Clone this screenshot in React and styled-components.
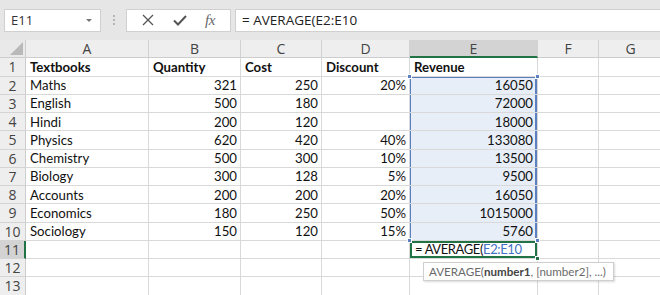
import React from 'react';
import styled, { createGlobalStyle } from 'styled-components';

const GlobalStyle = createGlobalStyle`
  html, body {
    margin: 0;
    padding: 0;
    background: #ffffff;
    overflow: hidden;
  }
  * { box-sizing: border-box; }
`;

const Sheet = styled.div`
  width: 660px;
  height: 295px;
  overflow: hidden;
  font-family: Lato, 'Noto Sans', sans-serif;
  background: #fff;
`;

const FormulaBar = styled.div`
  height: 40px;
  background: #e6e6e6;
  display: flex;
  align-items: center;
  padding: 0 0 0 4px;
`;

const NameBox = styled.div`
  width: 97px;
  height: 23px;
  background: #fff;
  border: 1px solid #d0d0d0;
  display: flex;
  align-items: center;
  justify-content: space-between;
  padding: 0 8px 0 6px;
  font-family: 'Open Sans', sans-serif;
  font-size: 13px;
  color: #333;
`;

const Caret = styled.span`
  width: 0;
  height: 0;
  border-left: 3px solid transparent;
  border-right: 3px solid transparent;
  border-top: 3px solid #777;
`;

const Grip = styled.div`
  width: 25px;
  display: flex;
  flex-direction: column;
  align-items: center;
  gap: 2px;

  span {
    width: 2px;
    height: 2px;
    background: #b4b4b4;
  }
`;

const IconBox = styled.div`
  width: 105px;
  height: 23px;
  background: #fff;
  border: 1px solid #d0d0d0;
  display: flex;
  align-items: center;
  justify-content: space-around;
  padding: 0 6px;
  color: #555;
`;

const Fx = styled.span`
  font-family: 'Liberation Serif', serif;
  font-style: italic;
  font-size: 15px;
  color: #666;
  letter-spacing: -0.5px;
`;

const FormulaInput = styled.div`
  flex: 1;
  height: 23px;
  margin-left: 4px;
  background: #fff;
  border: 1px solid #d0d0d0;
  border-right: none;
  display: flex;
  align-items: center;
  padding-left: 6px;
  font-family: 'Open Sans', sans-serif;
  font-size: 13.5px;
  color: #222;
`;

const Grid = styled.div`
  display: grid;
  grid-template-columns: 26px 123px 92px 81px 88px 128px 61px 64px 1fr;
  grid-auto-rows: 18.25px;
`;

const Corner = styled.div`
  background: #e9e9e9;
  border-right: 1px solid #cdcdcd;
  border-bottom: 1px solid #cdcdcd;
  position: relative;
  overflow: hidden;

  &::after {
    content: '';
    position: absolute;
    right: 2px;
    bottom: 2px;
    border-left: 13px solid transparent;
    border-bottom: 13px solid #b9b9b9;
  }
`;

const ColHead = styled.div`
  background: ${p => (p.$active ? '#d3d3d3' : '#eeeeee')};
  border-right: 1px solid #d2d2d2;
  border-bottom: ${p => (p.$active ? '2px solid #217346' : '1px solid #cdcdcd')};
  display: flex;
  align-items: center;
  justify-content: center;
  font-family: 'Open Sans', sans-serif;
  font-size: 14px;
  color: #444;
`;

const RowHead = styled.div`
  background: ${p => (p.$active ? '#d3d3d3' : '#eeeeee')};
  border-right: ${p => (p.$active ? '2px solid #217346' : '1px solid #cdcdcd')};
  border-bottom: 1px solid #d4d4d4;
  display: flex;
  align-items: center;
  justify-content: center;
  font-family: 'Open Sans', sans-serif;
  font-size: 14px;
  color: #444;
`;

const Cell = styled.div`
  position: relative;
  border-right: 1px solid #d9d9d9;
  border-bottom: 1px solid #d9d9d9;
  background: ${p => (p.$inRange ? '#e8eef8' : '#fff')};
  display: flex;
  align-items: center;
  justify-content: ${p => (p.$right ? 'flex-end' : 'flex-start')};
  padding: 0 ${p => (p.$inRange ? 4 : 3)}px 0 4px;
  font-size: 13.2px;
  font-weight: ${p => (p.$bold ? 700 : 400)};
  color: #111;
  white-space: nowrap;
  ${p => p.$inRange && `
    box-shadow: inset 1px 0 0 #5b7fc0, inset -2px 0 0 #5b7fc0
      ${p.$top ? ', inset 0 1px 0 #5b7fc0' : ''};
  `}
  ${p => p.$active && `
    box-shadow: inset 0 0 0 2px #217346;
    padding-left: 5px;
    font-size: 13px;
    letter-spacing: -0.4px;
    overflow: visible;
  `}
`;

const Handle = styled.span`
  position: absolute;
  width: 5px;
  height: 5px;
  background: ${p => p.$color};
  border: 1px solid #fff;
  ${p => (p.$top ? 'top: -3px;' : 'bottom: -3px;')}
  ${p => (p.$left ? 'left: -3px;' : 'right: -3px;')}
  z-index: 2;
`;

const RefText = styled.span`
  color: #4472c4;
`;

const Tooltip = styled.div`
  position: absolute;
  top: 21px;
  left: 13px;
  height: 19px;
  background: #fff;
  border: 1px solid #cfcfcf;
  box-shadow: 1px 1px 2px rgba(0, 0, 0, 0.15);
  display: flex;
  align-items: center;
  padding: 0 7px 0 5px;
  font-family: Lato, 'Open Sans', sans-serif;
  font-size: 11.6px;
  font-weight: 400;
  letter-spacing: 0;
  color: #6a6a6a;
  z-index: 3;

  b { color: #444; font-weight: 700; }
`;

const cols = ['A', 'B', 'C', 'D', 'E', 'F', 'G'];

const rows = [
  ['Textbooks', 'Quantity', 'Cost', 'Discount', 'Revenue'],
  ['Maths', 321, 250, '20%', 16050],
  ['English', 500, 180, '', 72000],
  ['Hindi', 200, 120, '', 18000],
  ['Physics', 620, 420, '40%', 133080],
  ['Chemistry', 500, 300, '10%', 13500],
  ['Biology', 300, 128, '5%', 9500],
  ['Accounts', 200, 200, '20%', 16050],
  ['Economics', 180, 250, '50%', 1015000],
  ['Sociology', 150, 120, '15%', 5760],
  [],
  [],
  [],
];

const XIcon = () => (
  <svg width="12" height="12" viewBox="0 0 12 12">
    <path d="M1 1 L11 11 M11 1 L1 11" stroke="#555" strokeWidth="1.3" fill="none" />
  </svg>
);

const CheckIcon = () => (
  <svg width="14" height="11" viewBox="0 0 14 11">
    <path d="M1 5.5 L5 9.5 L13 1" stroke="#555" strokeWidth="2" fill="none" />
  </svg>
);

const App = () => {
  return (
    <Sheet>
      <GlobalStyle />
      <FormulaBar>
        <NameBox>
          E11
          <Caret />
        </NameBox>
        <Grip>
          <span />
          <span />
          <span />
        </Grip>
        <IconBox>
          <XIcon />
          <CheckIcon />
          <Fx>fx</Fx>
        </IconBox>
        <FormulaInput>= AVERAGE(E2:E10</FormulaInput>
      </FormulaBar>

      <Grid>
        <Corner />
        {cols.map(c => (
          <ColHead key={c} $active={c === 'E'}>{c}</ColHead>
        ))}
        <ColHead />

        {rows.map((r, i) => {
          const n = i + 1;
          return (
            <React.Fragment key={n}>
              <RowHead $active={n === 11}>{n}</RowHead>
              {cols.map((c, j) => {
                const v = r[j];
                const inRange = c === 'E' && n >= 2 && n <= 10;
                const active = c === 'E' && n === 11;
                const right = n > 1 && j > 0 && !active;
                return (
                  <Cell
                    key={c}
                    $bold={n === 1}
                    $right={right}
                    $inRange={inRange}
                    $top={n === 2}
                    $active={active}
                  >
                    {v}
                    {inRange && n === 2 && (
                      <>
                        <Handle $top $left $color="#5b7fc0" />
                        <Handle $top $color="#5b7fc0" />
                      </>
                    )}
                    {active && (
                      <>
                        <span>
                          = AVERAGE(<RefText>E2:E10</RefText>
                        </span>
                        <Handle $top $left $color="#5b7fc0" />
                        <Handle $top $color="#5b7fc0" />
                        <Handle $color="#217346" />
                        <Tooltip>
                          AVERAGE(<b>number1</b>, [number2], ...)
                        </Tooltip>
                      </>
                    )}
                  </Cell>
                );
              })}
              <Cell />
            </React.Fragment>
          );
        })}
      </Grid>
    </Sheet>
  );
};

export default App;
